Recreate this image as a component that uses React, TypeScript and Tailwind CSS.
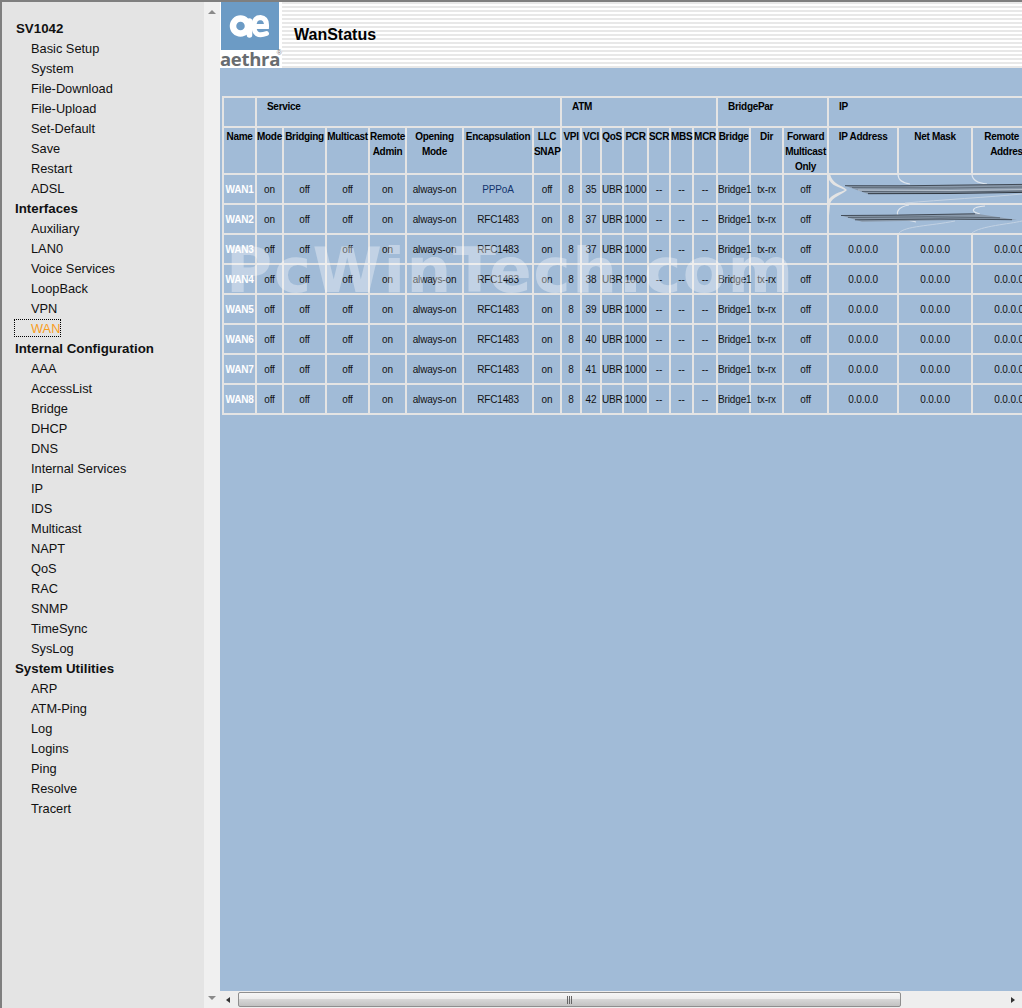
import React from "react";

const widths = [33, 27, 43, 43, 37, 57, 70, 28, 20, 20, 22, 25, 22, 23, 24, 33, 33, 45, 70, 74, 74];

const groups: [string, string[]][] = [
  ["SV1042", ["Basic Setup", "System", "File-Download", "File-Upload", "Set-Default", "Save", "Restart", "ADSL"]],
  ["Interfaces", ["Auxiliary", "LAN0", "Voice Services", "LoopBack", "VPN", "WAN"]],
  ["Internal Configuration", ["AAA", "AccessList", "Bridge", "DHCP", "DNS", "Internal Services", "IP", "IDS", "Multicast", "NAPT", "QoS", "RAC", "SNMP", "TimeSync", "SysLog"]],
  ["System Utilities", ["ARP", "ATM-Ping", "Log", "Logins", "Ping", "Resolve", "Tracert"]],
];

const heads: React.ReactNode[] = [
  "Name", "Mode", "Bridging", "Multicast", <>Remote<br />Admin</>, <>Opening<br />Mode</>, "Encapsulation", <>LLC<br />SNAP</>,
  "VPI", "VCI", "QoS", "PCR", "SCR", "MBS", "MCR", "Bridge", "Dir", <>Forward<br />Multicast<br />Only</>, "IP Address", "Net Mask",
  <>Remote&nbsp;&nbsp;&nbsp;&nbsp;&nbsp;&nbsp;<br />Address</>,
];

const rows = [
  ["on", "off", "off", "on", "always-on", "PPPoA", "off", "8", "35"],
  ["on", "off", "off", "on", "always-on", "RFC1483", "on", "8", "37"],
  ["off", "off", "off", "on", "always-on", "RFC1483", "on", "8", "37"],
  ["off", "off", "off", "on", "always-on", "RFC1483", "on", "8", "38"],
  ["off", "off", "off", "on", "always-on", "RFC1483", "on", "8", "39"],
  ["off", "off", "off", "on", "always-on", "RFC1483", "on", "8", "40"],
  ["off", "off", "off", "on", "always-on", "RFC1483", "on", "8", "41"],
  ["off", "off", "off", "on", "always-on", "RFC1483", "on", "8", "42"],
];

const groupHeads: [string, number][] = [["", 1], ["Service", 7], ["ATM", 7], ["BridgePar", 3], ["IP", 3]];

function Sidebar() {
  return (
    <div className="w-[202px] shrink-0 bg-[#e4e4e4] pt-[17px] text-[12.8px] text-[#111] font-['Liberation_Sans',Arial,sans-serif]">
      {groups.map(([title, items], g) => (
        <div key={title}>
          <div className={`h-5 leading-5 font-bold text-[13.3px] ${g === 0 ? "pl-[14px]" : "pl-[13px]"}`}>{title}</div>
          {items.map((it) =>
            it === "WAN" ? (
              <div key={it} className="h-5 pl-[13px] leading-5">
                <span className="inline-block h-4 leading-[18px] pl-4 text-[#f99d1c] outline-1 outline-dotted outline-black">WAN</span>
              </div>
            ) : (
              <div key={it} className="h-5 leading-5 pl-[29px]">{it}</div>
            )
          )}
        </div>
      ))}
    </div>
  );
}

function Logo() {
  return (
    <div className="w-[62px] h-[66px] shrink-0 bg-white relative">
      <div className="w-[58px] h-[48px] ml-px bg-[#6c9bc5] flex items-center justify-center">
        <svg width="58" height="48" viewBox="221 2 58 48" fill="none" stroke="#fff" strokeLinecap="round">
          <ellipse cx="240.5" cy="26" rx="7.5" ry="7.5" strokeWidth="6.5" />
          <path d="M249.5 21 V35" strokeWidth="5.5" />
          <path d="M266.5 33.5 Q254 38 254 26 Q254 17.5 260.5 17.5 Q267 18 266.5 26.5 L255 26.5" strokeWidth="5" />
        </svg>
      </div>
      <div className="flex h-[18px] items-center font-['Open_Sans',sans-serif] font-bold text-[18.5px] leading-[18px] tracking-[-0.3px] text-[#686c70]">
        aethra
      </div>
      <span className="absolute right-[0px] top-[47px] text-[7px] leading-[8px] text-[#777] font-['Liberation_Sans',sans-serif]">®</span>
    </div>
  );
}

function DataTable() {
  return (
    <table className="table-fixed border-collapse w-[823px] text-[10px] tracking-[-0.15px] text-[#111] font-['Liberation_Sans',Arial,sans-serif]">
      <colgroup>
        {widths.map((w, i) => (
          <col key={i} style={{ width: w }} />
        ))}
      </colgroup>
      <tbody>
        <tr className="h-[30px]">
          {groupHeads.map(([g, s], i) => (
            <td key={i} colSpan={s} className="border-2 border-[#e4e4e4] align-top pl-[10px] pt-px leading-[15px] font-bold tracking-[-0.3px] text-black">
              {g}
            </td>
          ))}
        </tr>
        <tr className="h-[47px]">
          {heads.map((h, i) => (
            <td key={i} className="border-2 border-[#e4e4e4] align-top text-center p-0 font-bold tracking-[-0.3px] text-black whitespace-nowrap">
              <div className="h-[44px] pt-px leading-[15px]">{h}</div>
            </td>
          ))}
        </tr>
        {rows.map((r, i) => (
          <tr key={i} className="h-[30px]">
            <td className="border-2 border-[#e4e4e4] text-center font-bold tracking-[-0.2px] text-white">{`WAN${i + 1}`}</td>
            {r.map((c, j) => (
              <td key={j} className={`border-2 border-[#e4e4e4] text-center ${c === "PPPoA" ? "text-[#12346e]" : ""}`}>{c}</td>
            ))}
            <td className="border-2 border-[#e4e4e4] text-center">UBR</td>
            <td className="border-2 border-[#e4e4e4] text-center">1000</td>
            <td className="border-2 border-[#e4e4e4] text-center">--</td>
            <td className="border-2 border-[#e4e4e4] text-center">--</td>
            <td className="border-2 border-[#e4e4e4] text-center">--</td>
            <td className="border-2 border-[#e4e4e4] text-center">Bridge1</td>
            <td className="border-2 border-[#e4e4e4] text-center">tx-rx</td>
            <td className="border-2 border-[#e4e4e4] text-center">off</td>
            {[0, 1, 2].map((k) => (
              <td key={k} className="border-2 border-[#e4e4e4] text-center">{i > 1 ? "0.0.0.0" : ""}</td>
            ))}
          </tr>
        ))}
      </tbody>
    </table>
  );
}

function HScroll() {
  return (
    <div className="h-[17px] shrink-0 bg-[#eeeeee] flex items-center relative">
      <svg width="14" height="16" viewBox="0 0 14 16" className="ml-[1px] shrink-0"><path d="M9 5 L5 8 L9 11 Z" fill="#333" /></svg>
      <div className="ml-[3px] w-[663px] h-[15px] border border-[#8e8e8e] rounded-[2px] bg-[linear-gradient(#f6f6f6_0,#ececec_45%,#d6d6d6_50%,#c2c2c2_100%)] flex items-center justify-center gap-px">
        <span className="w-px h-[8px] bg-[#666]" />
        <span className="w-px h-[8px] bg-[#666]" />
        <span className="w-px h-[8px] bg-[#666]" />
      </div>
      <svg width="14" height="16" viewBox="0 0 14 16" className="ml-auto mr-[2px] shrink-0"><path d="M5 5 L9 8 L5 11 Z" fill="#333" /></svg>
    </div>
  );
}

export default function App() {
  return (
    <div className="relative w-[1022px] h-[1008px] overflow-hidden bg-[#f0f0f0]">
      <div className="flex h-full border-t-2 border-l-2 border-[#7f7f7f]">
        <Sidebar />
        <div className="w-4 shrink-0 bg-[#f0f0f0] flex flex-col justify-between items-center py-[6px]">
          <svg width="10" height="8" viewBox="0 0 10 8"><path d="M1 6 L5 2 L9 6 Z" fill="#8a8a8a" /></svg>
          <svg width="10" height="8" viewBox="0 0 10 8"><path d="M1 2 L5 6 L9 2 Z" fill="#8a8a8a" /></svg>
        </div>
        <div className="flex-1 min-w-0 flex flex-col">
          <div className="h-[66px] shrink-0 flex bg-[repeating-linear-gradient(#e8e8e8_0,#e8e8e8_2px,#ffffff_2px,#ffffff_4px)]">
            <Logo />
            <div className="pl-3 pt-[24px] text-[16px] leading-[18px] font-bold text-black font-['Liberation_Sans',Arial,sans-serif]">WanStatus</div>
          </div>
          <div className="flex-1 min-h-0 bg-[#a1bbd7] pt-7 pl-[2px] overflow-hidden">
            <DataTable />
          </div>
          <HScroll />
        </div>
      </div>

      {/* smeared, scribbled-out address cells */}
      <svg className="absolute left-0 top-0 pointer-events-none" width="1022" height="1008" viewBox="0 0 1022 1008" fill="none">
        <rect x="829" y="175" width="193" height="28" fill="#a1bbd7" />
        <rect x="829" y="205" width="193" height="28" fill="#a1bbd7" />
        <path d="M827 174 C829 185 836 186 845 190 C836 194 829 195 827 204 L827.5 233 L830 204 C832 197 842 195 847 190 C842 185 832 184 830 174 Z" fill="#e4e4e4" />
        <path d="M898 174 C898 180 902 183 910 184 M972 174 C972 180 977 183 987 184" stroke="#dfe6ee" strokeWidth="1.2" />
        <path d="M909 205 C897 207 895 214 900 217 C904 220 910 220 916 222 M985 206 C971 207 970 212 980 214" stroke="#dfe6ee" strokeWidth="1.2" />
        <path d="M899 233 C905 226 930 226 955 221 M972 233 C980 226 1010 224 1022 221 M905 203 C940 200 990 197 1022 194" stroke="#c3d2e3" strokeWidth="1" />
        <path d="M845 185.7 L900 185.5 L1022 184 L1022 192.5 L950 193.5 L868 194 Z" fill="#8a99aa" />
        <path d="M845 185.7 L900 185.8 L1022 184.4" stroke="#39424d" strokeWidth="0.9" />
        <path d="M852 187.5 L950 188 L1022 187" stroke="#56626f" strokeWidth="0.8" />
        <path d="M858 190 L950 190.5 L1022 189.6" stroke="#cdd6e0" strokeWidth="0.7" />
        <path d="M862 191.5 L960 192 L1022 191" stroke="#4a5562" strokeWidth="0.8" />
        <path d="M868 193.7 L950 193.5 L1022 192.4" stroke="#2f3740" strokeWidth="1" />
        <path d="M841 215.5 L892 215 L975 213.5 L1017 220 L958 220 L862 221.7 Z" fill="#8a99aa" />
        <path d="M841 215.5 L892 215.2 L975 213.8" stroke="#39424d" strokeWidth="0.9" />
        <path d="M848 217.5 L930 216.8 L1000 217.8" stroke="#4e5a67" strokeWidth="0.8" />
        <path d="M855 219.8 L940 219 L1012 219.7" stroke="#3a444f" strokeWidth="0.9" />
      </svg>

      {/* watermark */}
      <div className="absolute left-[226px] top-[233px] pointer-events-none whitespace-nowrap text-[63px] leading-[76px] font-bold tracking-[1.5px] text-white/35 font-['DejaVu_Sans',Verdana,sans-serif]">
        PcWinTech.com
      </div>
    </div>
  );
}
